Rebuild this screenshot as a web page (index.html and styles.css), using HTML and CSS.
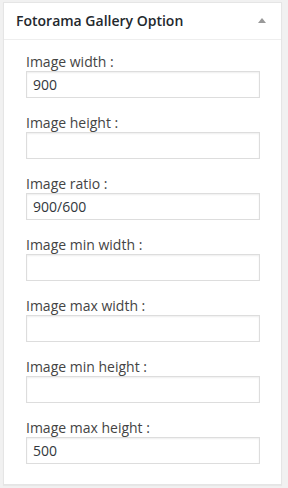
FILE: index.html
```html
<!DOCTYPE html>
<html lang="en">
<head>
  <meta charset="UTF-8">
  <title>Fotorama Gallery Option</title>
  <link rel="stylesheet" href="styles.css">
</head>
<body>
  <div class="postbox">
    <div class="postbox-head">
      <h2>Fotorama Gallery Option</h2>
      <span class="toggle"></span>
    </div>
    <div class="postbox-inside">
      <label class="field">Image width :<input type="text" value="900"></label>
      <label class="field">Image height :<input type="text" value=""></label>
      <label class="field">Image ratio :<input type="text" value="900/600"></label>
      <label class="field">Image min width :<input type="text" value=""></label>
      <label class="field">Image max width :<input type="text" value=""></label>
      <label class="field">Image min height :<input type="text" value=""></label>
      <label class="field">Image max height :<input type="text" value="500"></label>
    </div>
  </div>
</body>
</html>
```

FILE: styles.css
```css
body {
  margin: 0;
  padding: 2px 6px 4px 3px;
  background: #f1f1f1;
  font-family: 'Open Sans', 'Noto Sans', sans-serif;
  font-size: 14px;
  color: #444;
}
.postbox {
  background: #fff;
  border: 1px solid #e5e5e5;
  box-shadow: 0 1px 1px rgba(0, 0, 0, 0.04);
}
.postbox-head {
  display: flex;
  align-items: center;
  justify-content: space-between;
  padding: 8px 12px;
  border-bottom: 1px solid #eee;
}
.postbox-head h2 {
  margin: 0;
  font-size: 14px;
  font-weight: 600;
  line-height: 1.4;
  color: #23282d;
}
.toggle {
  width: 0;
  height: 0;
  margin-right: 3px;
  border-left: 4px solid transparent;
  border-right: 4px solid transparent;
  border-bottom: 5px solid #999;
}
.postbox-inside {
  padding: 12px 21px 5px 22px;
}
.field {
  display: block;
  line-height: 19px;
  margin-bottom: 15px;
}
.field input {
  display: block;
  box-sizing: border-box;
  width: 100%;
  height: 27px;
  margin: 0;
  padding: 0 6px;
  border: 1px solid #ddd;
  box-shadow: inset 0 1px 2px rgba(0, 0, 0, 0.07);
  font-family: inherit;
  font-size: 14px;
  color: #32373c;
  outline: none;
}
```
